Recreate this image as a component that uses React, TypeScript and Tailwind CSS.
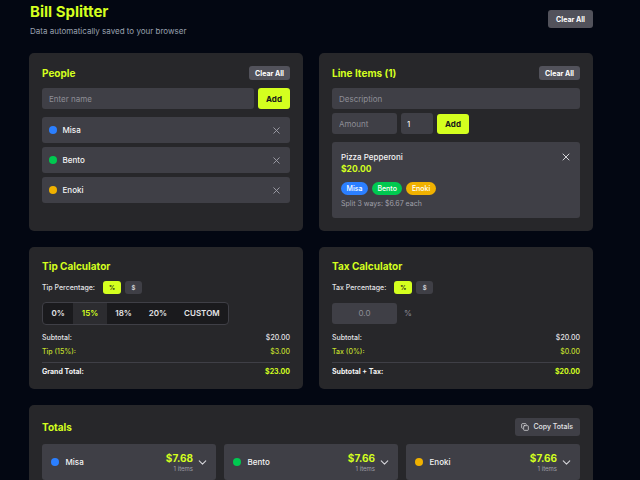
import React from 'react';
import { X, ChevronDown, Copy } from 'lucide-react';

const people = [
    { name: 'Misa', color: 'bg-[#2b7fff]', total: '$7.68' },
    { name: 'Bento', color: 'bg-[#00c950]', total: '$7.66' },
    { name: 'Enoki', color: 'bg-[#f0b100]', total: '$7.66' },
];

const tips = ['0%', '15%', '18%', '20%', 'CUSTOM'];

const SmallClear = () => (
    <button className="h-[14px] px-[6px] rounded-[3px] bg-[#52525b] text-white text-[7px] font-bold leading-none">Clear All</button>
);

const Card = ({ children, className = '' }: { children: React.ReactNode; className?: string }) => (
    <div className={`bg-[#27272a] rounded-[5px] p-[13px] ${className}`}>{children}</div>
);

const Title = ({ children }: { children: React.ReactNode }) => (
    <h2 className="text-[10px] leading-[12px] font-bold text-[#d4ff1f]">{children}</h2>
);

const Row = ({ label, value, className = '' }: { label: string; value: string; className?: string }) => (
    <div className={`flex justify-between text-[7px] leading-[10px] ${className}`}>
        <span>{label}</span>
        <span>{value}</span>
    </div>
);

const ModeToggle = ({ label }: { label: string }) => (
    <div className="flex items-center mt-[9px]">
        <span className="text-[7px] font-medium text-[#e4e4e7] leading-[13px]">{label}</span>
        <button className="ml-[8px] h-[13px] w-[18px] rounded-[3px] bg-[#d4ff1f] text-[#18181b] text-[6px] font-bold leading-none">%</button>
        <button className="ml-[4px] h-[13px] w-[17px] rounded-[3px] bg-[#3f3f46] text-[#d4d4d8] text-[6px] font-bold leading-none">$</button>
    </div>
);

export default function App() {
    return (
        <div className="min-h-screen bg-[#030712] font-['Inter',sans-serif] pb-10">
            <div className="w-[564px] ml-[29px]">
                {/* header */}
                <div className="flex items-center justify-between pt-[2.5px]">
                    <div>
                        <h1 className="text-[15px] leading-[18px] font-bold text-[#d4ff1f] ml-[1px]">Bill Splitter</h1>
                        <p className="text-[8px] leading-[10px] text-[#99a1af] mt-[5.5px] ml-[1px]">Data automatically saved to your browser</p>
                    </div>
                    <button className="h-[18px] px-[8px] rounded-[3px] bg-[#52525b] text-white text-[7px] font-bold leading-none">Clear All</button>
                </div>

                <div className="grid grid-cols-2 gap-4 mt-[17px]">
                    {/* people */}
                    <Card>
                        <div className="flex items-center justify-between h-[14px]">
                            <Title>People</Title>
                            <SmallClear />
                        </div>
                        <div className="flex gap-[4px] mt-[8px]">
                            <input placeholder="Enter name" className="flex-1 min-w-0 h-[21px] rounded-[3px] bg-[#3f3f46] px-[7px] text-[8px] text-white placeholder:text-[#8e8e96] outline-none" />
                            <button className="h-[21px] w-[32px] rounded-[3px] bg-[#d4ff1f] text-[#18181b] text-[8px] font-bold">Add</button>
                        </div>
                        <div className="flex flex-col gap-[4px] mt-[8px]">
                            {people.map(p => (
                                <div key={p.name} className="flex items-center h-[26px] rounded-[3px] bg-[#3f3f46] pl-[7px] pr-[8px]">
                                    <span className={`w-[7.5px] h-[7.5px] rounded-full ${p.color}`} />
                                    <span className="ml-[6px] text-[8px] font-medium text-[#f4f4f5] flex-1">{p.name}</span>
                                    <X size={11} strokeWidth={2} className="text-[#a1a1aa]" />
                                </div>
                            ))}
                        </div>
                    </Card>

                    {/* line items */}
                    <Card>
                        <div className="flex items-center justify-between h-[14px]">
                            <Title>Line Items (1)</Title>
                            <SmallClear />
                        </div>
                        <input placeholder="Description" className="block w-full mt-[8px] h-[21px] rounded-[3px] bg-[#3f3f46] px-[7px] text-[8px] text-white placeholder:text-[#8e8e96] outline-none" />
                        <div className="flex items-center gap-[4px] mt-[4px]">
                            <input placeholder="Amount" className="w-[65px] h-[21px] rounded-[3px] bg-[#3f3f46] px-[7px] text-[8px] text-white placeholder:text-[#8e8e96] outline-none" />
                            <input defaultValue="1" className="w-[32px] h-[21px] rounded-[3px] bg-[#3f3f46] px-[6px] text-[8px] text-white outline-none" />
                            <button className="h-[20px] w-[32px] rounded-[3px] bg-[#d4ff1f] text-[#18181b] text-[8px] font-bold">Add</button>
                        </div>
                        <div className="mt-[8px] rounded-[3px] bg-[#3f3f46] p-[9px] pr-[8px]">
                            <div className="flex justify-between items-start">
                                <div>
                                    <div className="text-[8px] leading-[12px] font-medium text-[#f4f4f5]">Pizza Pepperoni</div>
                                    <div className="text-[8.5px] leading-[12px] font-bold text-[#d4ff1f]">$20.00</div>
                                </div>
                                <X size={12} strokeWidth={2} className="text-[#d4d4d8]" />
                            </div>
                            <div className="flex gap-[4px] mt-[6.5px]">
                                {people.map(p => (
                                    <span key={p.name} className={`h-[13.5px] px-[5.5px] rounded-full ${p.color} text-white text-[7px] font-medium leading-[13.5px]`}>{p.name}</span>
                                ))}
                            </div>
                            <div className="mt-[4px] text-[7px] leading-[10px] text-[#9f9fa9]">Split 3 ways: $6.67 each</div>
                        </div>
                    </Card>

                    {/* tip */}
                    <Card>
                        <Title>Tip Calculator</Title>
                        <ModeToggle label="Tip Percentage:" />
                        <div className="flex w-fit mt-[8px] h-[22.5px] rounded-[4px] border border-[#3f3f46] bg-[#1a1a1d] overflow-hidden">
                            {tips.map(t => (
                                <div key={t} className={`px-[8.5px] flex items-center text-[8px] font-semibold ${t === '15%' ? 'bg-[#2c2c30] text-[#d4ff1f]' : 'text-[#e4e4e7]'}`}>{t}</div>
                            ))}
                        </div>
                        <Row label="Subtotal:" value="$20.00" className="mt-[8px] text-[#e4e4e7] font-medium" />
                        <Row label="Tip (15%):" value="$3.00" className="mt-[4px] text-[#c2df2c] font-medium" />
                        <div className="h-px bg-[#3f3f46] mt-[5px]" />
                        <div className="flex justify-between text-[7px] leading-[9px] font-bold mt-[4px]">
                            <span className="text-[#f4f4f5]">Grand Total:</span>
                            <span className="text-[#d4ff1f]">$23.00</span>
                        </div>
                    </Card>

                    {/* tax */}
                    <Card>
                        <Title>Tax Calculator</Title>
                        <ModeToggle label="Tax Percentage:" />
                        <div className="flex items-center mt-[8px] h-[22.5px]">
                            <input defaultValue="0.0" className="w-[65px] h-[21px] rounded-[3px] bg-[#3f3f46] text-center text-[8px] text-[#8e8e96] outline-none" />
                            <span className="ml-[7px] text-[8px] text-[#8e8e96]">%</span>
                        </div>
                        <Row label="Subtotal:" value="$20.00" className="mt-[8px] text-[#e4e4e7] font-medium" />
                        <Row label="Tax (0%):" value="$0.00" className="mt-[4px] text-[#c2df2c] font-medium" />
                        <div className="h-px bg-[#3f3f46] mt-[5px]" />
                        <div className="flex justify-between text-[7px] leading-[9px] font-bold mt-[4px]">
                            <span className="text-[#f4f4f5]">Subtotal + Tax:</span>
                            <span className="text-[#d4ff1f]">$20.00</span>
                        </div>
                    </Card>
                </div>

                {/* totals */}
                <Card className="mt-4">
                    <div className="flex items-center justify-between">
                        <Title>Totals</Title>
                        <button className="flex items-center h-[18.5px] pl-[6px] pr-[7px] rounded-[3px] bg-[#3f3f46] text-[#e4e4e7] text-[7px] font-medium">
                            <Copy size={8} strokeWidth={2.2} />
                            <span className="ml-[4px]">Copy Totals</span>
                        </button>
                    </div>
                    <div className="grid grid-cols-3 gap-[8px] mt-[8px]">
                        {people.map(p => (
                            <div key={p.name} className="flex items-center h-[36px] rounded-[3px] bg-[#3f3f46] pl-[9px] pr-[7px]">
                                <span className={`w-[7.5px] h-[7.5px] rounded-full ${p.color}`} />
                                <span className="ml-[7px] text-[8px] font-medium text-[#f4f4f5] flex-1">{p.name}</span>
                                <div className="flex flex-col items-end">
                                    <span className="text-[10px] leading-[12px] font-bold text-[#d4ff1f]">{p.total}</span>
                                    <span className="text-[6px] leading-[8px] text-[#9f9fa9] mt-[1px]">1 items</span>
                                </div>
                                <ChevronDown size={13} className="ml-[3px] text-[#d4d4d8]" />
                            </div>
                        ))}
                    </div>
                </Card>
            </div>
        </div>
    );
}
